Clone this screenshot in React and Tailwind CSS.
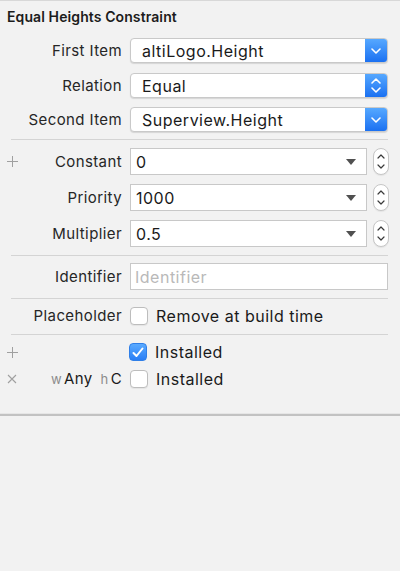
import React from "react";

const Chevron = ({ dir = "down", className = "" }) => (
  <svg width="10" height="6" viewBox="0 0 10 6" className={className}>
    {dir === "down" ? (
      <path d="M1 1 L5 5 L9 1" fill="none" stroke="currentColor" strokeWidth="1.6" strokeLinecap="round" strokeLinejoin="round" />
    ) : (
      <path d="M1 5 L5 1 L9 5" fill="none" stroke="currentColor" strokeWidth="1.6" strokeLinecap="round" strokeLinejoin="round" />
    )}
  </svg>
);

const Popup = ({ value, updown }) => (
  <div className="w-[258px] h-[25px] flex bg-white rounded-[4px] border border-[#c9c9c9] shadow-[0_1px_1px_rgba(0,0,0,0.12)] overflow-hidden">
    <div className="flex-1 flex items-center pl-[11px] text-[16px] tracking-[0.5px] leading-[18px] text-[#1a1a1a]">{value}</div>
    <div className="w-[22px] flex flex-col items-center justify-center gap-[3px] text-white bg-gradient-to-b from-[#56a8ff] to-[#1a70f1]">
      {updown ? (
        <>
          <Chevron dir="up" />
          <Chevron dir="down" />
        </>
      ) : (
        <Chevron dir="down" />
      )}
    </div>
  </div>
);

const Stepper = () => (
  <div className="w-[16px] h-[27px] rounded-full bg-white border border-[#c6c6c6] flex flex-col items-center justify-center gap-[5px] text-[#3a3a3a] shadow-[0_1px_1px_rgba(0,0,0,0.06)]">
    <svg width="8" height="5" viewBox="0 0 8 5"><path d="M1 4 L4 1 L7 4" fill="none" stroke="currentColor" strokeWidth="1.2" strokeLinecap="round" strokeLinejoin="round" /></svg>
    <svg width="8" height="5" viewBox="0 0 8 5"><path d="M1 1 L4 4 L7 1" fill="none" stroke="currentColor" strokeWidth="1.2" strokeLinecap="round" strokeLinejoin="round" /></svg>
  </div>
);

const Combo = ({ value }) => (
  <div className="flex items-center gap-[6px]">
    <div className="w-[237px] h-[27px] bg-white border border-[#c8c8c8] flex items-center pl-[5px] pr-[10px] text-[16px] tracking-[0.5px] leading-[18px] text-[#1a1a1a]">
      <span className="flex-1">{value}</span>
      <svg width="10" height="6" viewBox="0 0 10 6"><path d="M0 0 L10 0 L5 6 Z" fill="#505050" /></svg>
    </div>
    <Stepper />
  </div>
);

const Plus = () => (
  <svg width="11" height="11" viewBox="0 0 11 11">
    <path d="M5.5 0 V11 M0 5.5 H11" stroke="#a0a0a0" strokeWidth="1" />
  </svg>
);

const Cross = () => (
  <svg width="10" height="10" viewBox="0 0 10 10">
    <path d="M1 1 L9 9 M9 1 L1 9" stroke="#a0a0a0" strokeWidth="1.1" />
  </svg>
);

const Checkbox = ({ checked }) =>
  checked ? (
    <div className="w-[18px] h-[18px] rounded-[4px] bg-gradient-to-b from-[#5aaaff] to-[#2a7ef5] border border-[#2f7fe8] flex items-center justify-center">
      <svg width="12" height="11" viewBox="0 0 12 11">
        <path d="M1.5 6 L4.5 9 L10.5 1.5" fill="none" stroke="white" strokeWidth="2" strokeLinecap="round" strokeLinejoin="round" />
      </svg>
    </div>
  ) : (
    <div className="w-[18px] h-[18px] rounded-[4px] bg-white border border-[#bdbdbd] shadow-[0_1px_1px_rgba(0,0,0,0.06)]" />
  );

const Label = ({ children, icon }) => (
  <div className="w-[122px] flex items-center justify-between pl-[7px] text-[15px] tracking-[0.4px] leading-[18px] text-[#262626]">
    <span className="w-[11px] flex items-center">{icon}</span>
    <span className="text-right whitespace-nowrap">{children}</span>
  </div>
);

const Sep = ({ className = "" }) => <div className={`h-px bg-[#d4d4d4] ml-[11px] mr-[12px] ${className}`} />;

const Value = ({ children }) => (
  <span className="text-[16px] tracking-[0.5px] leading-[18px] text-[#1a1a1a]">{children}</span>
);

export default function App() {
  return (
    <div
      className="w-[400px] h-[571px] bg-[#f2f2f2] border-t border-[#d8d8d8] flex flex-col"
      style={{ fontFamily: "Inter, 'Noto Sans', sans-serif" }}
    >
      <div className="h-[31px] flex items-center pl-[7px] text-[14px] tracking-[0.1px] font-semibold text-[#1c1c1c]">
        Equal Heights Constraint
      </div>

      <div className="mt-[6px] flex items-center">
        <Label>First Item</Label>
        <div className="ml-[8px]"><Popup value="altiLogo.Height" /></div>
      </div>
      <div className="mt-[10px] flex items-center">
        <Label>Relation</Label>
        <div className="ml-[8px]"><Popup value="Equal" updown /></div>
      </div>
      <div className="mt-[9px] flex items-center">
        <Label>Second Item</Label>
        <div className="ml-[8px]"><Popup value="Superview.Height" /></div>
      </div>

      <Sep className="mt-[7px]" />

      <div className="mt-[8px] flex items-center">
        <Label icon={<Plus />}>Constant</Label>
        <div className="ml-[8px]"><Combo value="0" /></div>
      </div>
      <div className="mt-[9px] flex items-center">
        <Label>Priority</Label>
        <div className="ml-[8px]"><Combo value="1000" /></div>
      </div>
      <div className="mt-[9px] flex items-center">
        <Label>Multiplier</Label>
        <div className="ml-[8px]"><Combo value="0.5" /></div>
      </div>

      <Sep className="mt-[8px]" />

      <div className="mt-[7px] flex items-center">
        <Label>Identifier</Label>
        <div className="ml-[8px] w-[258px] h-[27px] bg-white border border-[#c8c8c8] flex items-center pl-[4px] text-[16px] tracking-[0.5px] leading-[18px] text-[#b9b9b9]">
          Identifier
        </div>
      </div>

      <Sep className="mt-[8px]" />

      <div className="mt-[8px] flex items-center">
        <Label>Placeholder</Label>
        <div className="ml-[8px] flex items-center gap-[8px]">
          <Checkbox />
          <Value>Remove at build time</Value>
        </div>
      </div>

      <Sep className="mt-[9px]" />

      <div className="mt-[8px] flex items-center">
        <Label icon={<Plus />}></Label>
        <div className="ml-[7px] flex items-center gap-[8px]">
          <Checkbox checked />
          <Value>Installed</Value>
        </div>
      </div>
      <div className="mt-[9px] flex items-center">
        <Label icon={<Cross />}>
          <span className="text-[13px] text-[#8c8c8c] mr-[2px]">w</span>
          <span className="text-[15px] text-[#1a1a1a]">Any</span>
          <span className="text-[13px] text-[#8c8c8c] ml-[8px] mr-[2px]">h</span>
          <span className="text-[15px] text-[#1a1a1a]">C</span>
        </Label>
        <div className="ml-[8px] flex items-center gap-[8px]">
          <Checkbox />
          <Value>Installed</Value>
        </div>
      </div>

      <div className="mt-[25px] h-px bg-[#e6e6e6]" />
      <div className="h-[2px] bg-[#c2c2c2]" />
    </div>
  );
}
